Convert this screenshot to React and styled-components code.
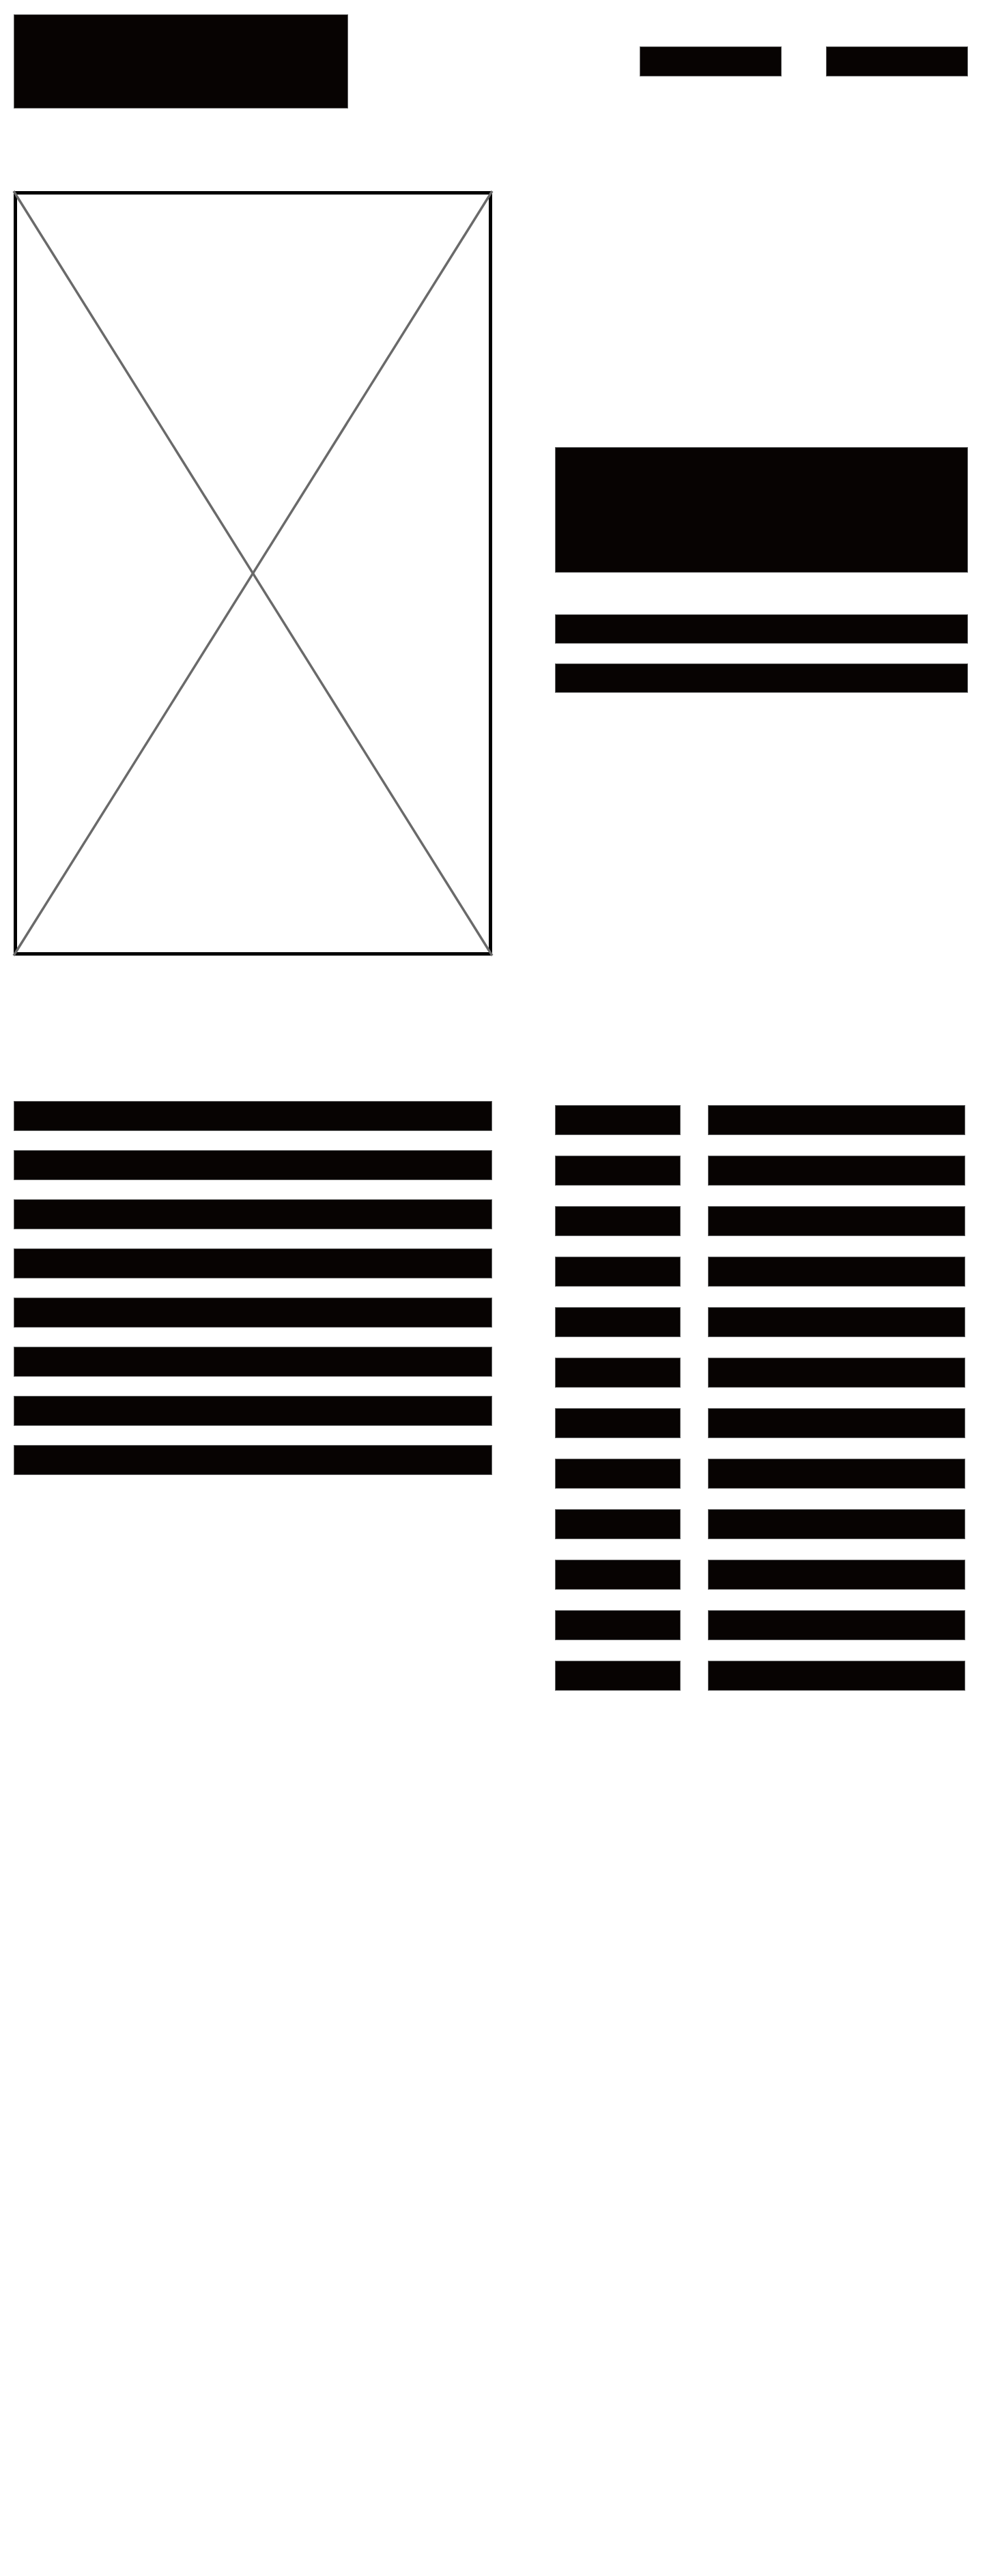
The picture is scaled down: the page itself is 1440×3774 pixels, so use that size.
import React from "react";
import styled, { createGlobalStyle } from "styled-components";

const Global = createGlobalStyle`
  html, body { margin: 0; padding: 0; background: #ffffff; }
  body { font-family: "Liberation Sans", Arial, sans-serif; }
`;

const Page = styled.div`
  min-height: 3774px;
  padding: 21px 22px 0 20px;
  box-sizing: border-box;
`;

const Block = styled.div`
  box-sizing: border-box;
  background: #070302;
  border: 1px solid #666666;
  width: ${(p) => p.$w || "100%"};
  height: ${(p) => p.$h}px;
`;

const Header = styled.header`
  display: flex;
  justify-content: space-between;
  align-items: center;
`;

const Nav = styled.nav`
  display: flex;
  gap: 65px;
`;

const TwoCol = styled.section`
  display: grid;
  grid-template-columns: 701px 1fr;
  column-gap: 92px;
  margin-top: ${(p) => p.$mt}px;
`;

const ImageBox = styled.div`
  position: relative;
  box-sizing: border-box;
  height: 1120px;
  border: 5px solid #000000;
`;

const Cross = styled.svg`
  position: absolute;
  top: -5px;
  left: -5px;
  width: calc(100% + 10px);
  height: calc(100% + 10px);
  overflow: visible;
`;

const HeroText = styled.div`
  display: flex;
  flex-direction: column;
  justify-content: center;
  padding-bottom: 10px;
`;

const Subs = styled.div`
  display: flex;
  flex-direction: column;
  gap: 29px;
  margin-top: 61px;
`;

const List = styled.div`
  display: flex;
  flex-direction: column;
  gap: 28px;
`;

const Table = styled.div`
  display: grid;
  grid-template-columns: 184px 377px;
  column-gap: 40px;
  row-gap: 30px;
  padding-top: 6px;
  align-content: start;
`;

export default function App() {
  const rows = Array.from({ length: 12 });
  const bars = Array.from({ length: 8 });
  return (
    <>
      <Global />
      <Page>
        <Header>
          <Block $w="490px" $h={138} />
          <Nav>
            <Block $w="208px" $h={44} />
            <Block $w="208px" $h={44} />
          </Nav>
        </Header>

        <TwoCol $mt={121}>
          <ImageBox>
            <Cross viewBox="0 0 100 100" preserveAspectRatio="none">
              <line x1="0" y1="0" x2="100" y2="100" stroke="#6a6a6a" strokeWidth="3.5" vectorEffect="non-scaling-stroke" />
              <line x1="100" y1="0" x2="0" y2="100" stroke="#6a6a6a" strokeWidth="3.5" vectorEffect="non-scaling-stroke" />
            </Cross>
          </ImageBox>
          <HeroText>
            <Block $h={184} />
            <Subs>
              <Block $h={43} />
              <Block $h={43} />
            </Subs>
          </HeroText>
        </TwoCol>

        <TwoCol $mt={213}>
          <List>
            {bars.map((_, i) => (
              <Block key={i} $h={44} />
            ))}
          </List>
          <Table>
            {rows.map((_, i) => (
              <React.Fragment key={i}>
                <Block $h={44} />
                <Block $h={44} />
              </React.Fragment>
            ))}
          </Table>
        </TwoCol>
      </Page>
    </>
  );
}
